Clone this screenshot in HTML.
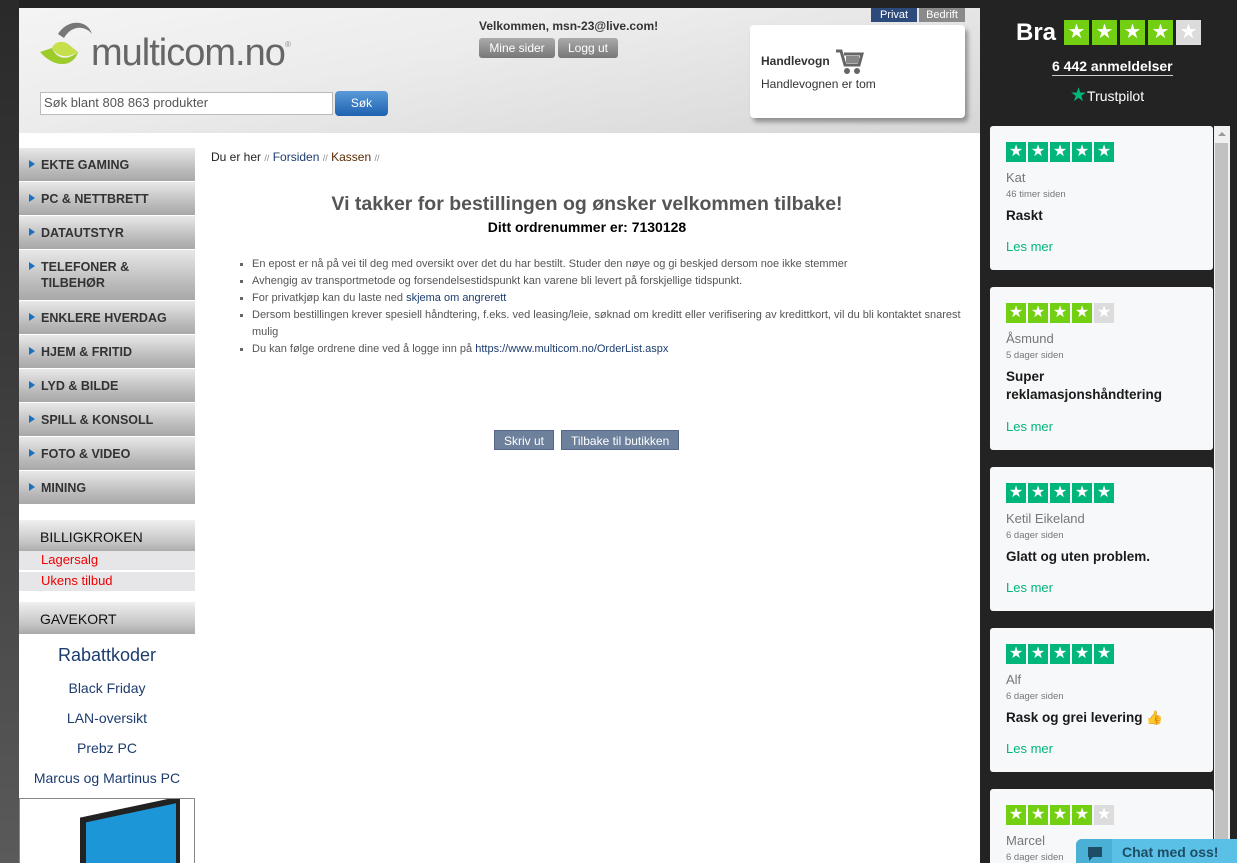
<!DOCTYPE html>
<html style="overflow:hidden;width:1237px;height:863px"><head><meta charset="utf-8"><style>
*{margin:0;padding:0;box-sizing:border-box}
body{width:1237px;height:863px;overflow:hidden;background:#232323;font-family:"Liberation Sans",Arial,sans-serif;position:relative}
.a{position:absolute}
#strip{left:0;top:0;width:19px;height:863px;background:linear-gradient(#2a2a2a,#3a3a3a 40%,#5a5a5a)}
#page{left:19px;top:8px;width:961px;height:855px;background:#fff}
#hdr{left:19px;top:8px;width:961px;height:125px;background:linear-gradient(170deg,#f4f4f4 0%,#ececec 40%,#d6d6d6 100%)}
.nav{left:19px;width:176px;background:linear-gradient(#e8e8e8,#b9b9b9 70%,#a8a8a8);color:#333;font-weight:bold;font-size:12.5px;padding-left:22px;line-height:16px}
.nav:before{content:"";position:absolute;left:10px;top:12px;border-left:6px solid #1a6fc0;border-top:4px solid transparent;border-bottom:4px solid transparent}
.sec{left:19px;width:176px;height:32px;background:linear-gradient(#f0f0f0,#c4c4c4 70%,#a9a9a9);font-size:14px;color:#111;padding:9px 0 0 21px}
.sub{left:19px;width:176px;height:19px;background:#e6e6e9;color:#e00;font-size:13px;padding:1px 0 0 22px}
.lk{left:19px;width:176px;text-align:center;color:#1d3c6e;font-size:14px}
ul{list-style:none}
li{font-size:11px;color:#555;line-height:17px;position:relative;padding-left:20px}
li:before{content:"";position:absolute;left:8px;top:7px;width:3px;height:3px;background:#666}
li a{color:#1d3c6e}
.btn{background:#6d819d;color:#fff;font-size:12px;height:20px;line-height:20px;padding:0 9px;border:1px solid #56688a}
.card{left:990px;width:223px;background:#f7f8fa;border-radius:3px}
.stars{display:flex;gap:2px;position:absolute;left:16px;top:16px}
.stars span{width:20px;height:20px;background:#00b67a;color:#fff;font-size:16px;line-height:20px;text-align:center}
.l span{background:#73cf11}.stars span.g{background:#dcdcdc}
.nm{left:16px;top:44px;color:#777;font-size:13px}
.tm{left:16px;top:63px;color:#777;font-size:9.5px}
.ti{left:16px;top:81px;color:#1a1a1a;font-size:13.5px;font-weight:bold;line-height:18px;width:190px}
.lm{left:16px;color:#00b67a;font-size:13px}
</style></head><body>
<div class="a" id="strip"></div>
<div class="a" id="page"></div>
<div class="a" id="hdr"></div>
<svg class="a" style="left:38px;top:18px" width="60" height="58" viewBox="0 0 60 58"><path d="M20 16 C30 0 50 2 54 16 C48 8 34 6 26 20 Z" fill="#777"/><path d="M2 34 L14 30 C18 40 28 44 40 34 C36 48 18 52 2 34 Z" fill="#9ccb2a"/><path d="M14 30 C16 24 24 22 30 26 L40 34 C30 40 20 40 14 30Z" fill="#c5e04a"/></svg>
<div class="a" style="left:91px;top:32px;font-size:38px;color:#666;letter-spacing:-1px;line-height:42px">multicom.no</div>
<div class="a" style="left:285px;top:40px;font-size:8px;color:#888">®</div>
<div class="a" style="left:40px;top:92px;width:293px;height:23px;background:#fff;border:1px solid #bbb;font-size:13px;color:#555;padding:2px 3px">Søk blant 808 863 produkter</div>
<div class="a" style="left:335px;top:91px;width:53px;height:25px;background:linear-gradient(#5a9ad8,#1e62b0);border-radius:4px;color:#fff;font-size:12px;text-align:center;line-height:25px">Søk</div>
<div class="a" style="left:479px;top:19px;font-size:12px;font-weight:bold;color:#333">Velkommen, msn-23@live.com!</div>
<div class="a" style="left:479px;top:38px;width:76px;height:20px;background:linear-gradient(#aaa,#777);border-radius:3px;color:#fff;font-size:12px;text-align:center;line-height:20px">Mine sider</div>
<div class="a" style="left:558px;top:38px;width:60px;height:20px;background:linear-gradient(#aaa,#777);border-radius:3px;color:#fff;font-size:12px;text-align:center;line-height:20px">Logg ut</div>
<div class="a" style="left:871px;top:8px;width:46px;height:14px;background:#2c4a7c;color:#fff;font-size:11px;text-align:center;line-height:14px">Privat</div>
<div class="a" style="left:919px;top:8px;width:46px;height:14px;background:#8a8a8a;color:#fff;font-size:11px;text-align:center;line-height:14px">Bedrift</div>
<div class="a" style="left:750px;top:25px;width:215px;height:93px;background:#fff;border-radius:4px;box-shadow:3px 4px 5px rgba(0,0,0,.35)"></div>
<div class="a" style="left:761px;top:54px;font-size:12px;font-weight:bold;color:#333">Handlevogn</div>
<svg class="a" style="left:836px;top:49px" width="28" height="26" viewBox="0 0 28 26"><path d="M0 2h5l4 14h14l3-11H8" fill="none" stroke="#666" stroke-width="3"/><rect x="10" y="7" width="13" height="7" fill="#888"/><circle cx="11" cy="22" r="3" fill="#666"/><circle cx="21" cy="22" r="3" fill="#666"/></svg>
<div class="a" style="left:761px;top:77px;font-size:12px;color:#333">Handlevognen er tom</div>

<div class="a nav" style="top:148px;height:33px;padding-top:9px">EKTE GAMING</div>
<div class="a nav" style="top:182px;height:33px;padding-top:9px">PC &amp; NETTBRETT</div>
<div class="a nav" style="top:216px;height:33px;padding-top:9px">DATAUTSTYR</div>
<div class="a nav" style="top:250px;height:50px;padding-top:9px">TELEFONER &amp;<br>TILBEHØR</div>
<div class="a nav" style="top:301px;height:33px;padding-top:9px">ENKLERE HVERDAG</div>
<div class="a nav" style="top:335px;height:33px;padding-top:9px">HJEM &amp; FRITID</div>
<div class="a nav" style="top:369px;height:33px;padding-top:9px">LYD &amp; BILDE</div>
<div class="a nav" style="top:403px;height:33px;padding-top:9px">SPILL &amp; KONSOLL</div>
<div class="a nav" style="top:437px;height:33px;padding-top:9px">FOTO &amp; VIDEO</div>
<div class="a nav" style="top:471px;height:33px;padding-top:9px">MINING</div>

<div class="a sec" style="top:520px">BILLIGKROKEN</div>
<div class="a sub" style="top:551px">Lagersalg</div>
<div class="a sub" style="top:572px">Ukens tilbud</div>
<div class="a sec" style="top:602px">GAVEKORT</div>
<div class="a lk" style="top:645px;font-size:18px">Rabattkoder</div>
<div class="a lk" style="top:680px">Black Friday</div>
<div class="a lk" style="top:710px">LAN-oversikt</div>
<div class="a lk" style="top:740px">Prebz PC</div>
<div class="a lk" style="top:770px">Marcus og Martinus PC</div>
<div class="a" style="left:19px;top:798px;width:176px;height:65px;border:1px solid #888;border-bottom:none;background:#fff;overflow:hidden"><div class="a" style="left:60px;top:8px;width:100px;height:70px;background:#222;transform:skewY(-12deg)"><div class="a" style="left:6px;top:6px;width:90px;height:70px;background:#1d96d8"></div></div></div>

<div class="a" style="left:211px;top:150px;font-size:12px;color:#222">Du er her <span style="color:#888;font-size:9px">//</span> <span style="color:#1d3c6e">Forsiden</span> <span style="color:#888;font-size:9px">//</span> <span style="color:#5a2a00">Kassen</span> <span style="color:#888;font-size:9px">//</span></div>
<div class="a" style="left:211px;top:193px;width:752px;text-align:center;font-size:19.5px;font-weight:bold;color:#555">Vi takker for bestillingen og ønsker velkommen tilbake!</div>
<div class="a" style="left:211px;top:219px;width:752px;text-align:center;font-size:14px;font-weight:bold;color:#000">Ditt ordrenummer er: 7130128</div>
<ul class="a" style="left:232px;top:256px;width:740px">
<li>En epost er nå på vei til deg med oversikt over det du har bestilt. Studer den nøye og gi beskjed dersom noe ikke stemmer</li>
<li>Avhengig av transportmetode og forsendelsestidspunkt kan varene bli levert på forskjellige tidspunkt.</li>
<li>For privatkjøp kan du laste ned <a>skjema om angrerett</a></li>
<li>Dersom bestillingen krever spesiell håndtering, f.eks. ved leasing/leie, søknad om kreditt eller verifisering av kredittkort, vil du bli kontaktet snarest mulig</li>
<li>Du kan følge ordrene dine ved å logge inn på <a>https://www.multicom.no/OrderList.aspx</a></li>
</ul>
<div class="a btn" style="left:494px;top:430px">Skriv ut</div>
<div class="a btn" style="left:561px;top:430px">Tilbake til butikken</div>

<div class="a" style="left:1016px;top:19px;color:#fff;font-size:24px;font-weight:bold">Bra</div>
<div class="stars l" style="left:1064px;top:20px;gap:3px"><span style="width:25px;height:25px;font-size:20px;line-height:25px">★</span><span style="width:25px;height:25px;font-size:20px;line-height:25px">★</span><span style="width:25px;height:25px;font-size:20px;line-height:25px">★</span><span style="width:25px;height:25px;font-size:20px;line-height:25px">★</span><span class="g" style="width:25px;height:25px;font-size:20px;line-height:25px">★</span></div>
<div class="a" style="left:1052px;top:58px;color:#fff;font-size:14px;font-weight:bold;border-bottom:1px solid #ccc;line-height:17px">6 442 anmeldelser</div>
<div class="a" style="left:1070px;top:84px;color:#fff;font-size:14px"><span style="color:#00b67a;font-size:19px">★</span>Trustpilot</div>
<div class="a" style="left:1214px;top:126px;width:16px;height:737px;background:#f0f0f0"><div class="a" style="left:1px;top:17px;width:13px;height:720px;background:#c1c1c1"></div><div class="a" style="left:4px;top:6px;border-bottom:4px solid #999;border-left:4px solid transparent;border-right:4px solid transparent"></div></div>

<div class="a card" style="top:126px;height:144px"><div class="stars"><span>★</span><span>★</span><span>★</span><span>★</span><span>★</span></div><div class="a nm">Kat</div><div class="a tm">46 timer siden</div><div class="a ti">Raskt</div><div class="a lm" style="top:113px">Les mer</div></div>
<div class="a card" style="top:287px;height:163px"><div class="stars l"><span>★</span><span>★</span><span>★</span><span>★</span><span class="g">★</span></div><div class="a nm">Åsmund</div><div class="a tm">5 dager siden</div><div class="a ti">Super reklamasjonshåndtering</div><div class="a lm" style="top:132px">Les mer</div></div>
<div class="a card" style="top:467px;height:144px"><div class="stars"><span>★</span><span>★</span><span>★</span><span>★</span><span>★</span></div><div class="a nm">Ketil Eikeland</div><div class="a tm">6 dager siden</div><div class="a ti">Glatt og uten problem.</div><div class="a lm" style="top:113px">Les mer</div></div>
<div class="a card" style="top:628px;height:144px"><div class="stars"><span>★</span><span>★</span><span>★</span><span>★</span><span>★</span></div><div class="a nm">Alf</div><div class="a tm">6 dager siden</div><div class="a ti">Rask og grei levering 👍</div><div class="a lm" style="top:113px">Les mer</div></div>
<div class="a card" style="top:789px;height:74px;border-radius:3px 3px 0 0"><div class="stars l"><span>★</span><span>★</span><span>★</span><span>★</span><span class="g">★</span></div><div class="a nm">Marcel</div><div class="a tm">6 dager siden</div></div>

<div class="a" style="left:1076px;top:839px;width:161px;height:24px;background:#5bc0e5;border-radius:6px 0 0 0;overflow:hidden"><div class="a" style="left:0;top:0;width:36px;height:30px;background:#4ab0d6"></div><svg class="a" style="left:10px;top:7px" width="18" height="16"><path d="M2 1h14v10H7l-4 4v-4H2z" fill="#1e4d66"/></svg><div class="a" style="left:46px;top:5px;color:#1e4d66;font-size:14px;font-weight:bold">Chat med oss!</div></div>
</body></html>
